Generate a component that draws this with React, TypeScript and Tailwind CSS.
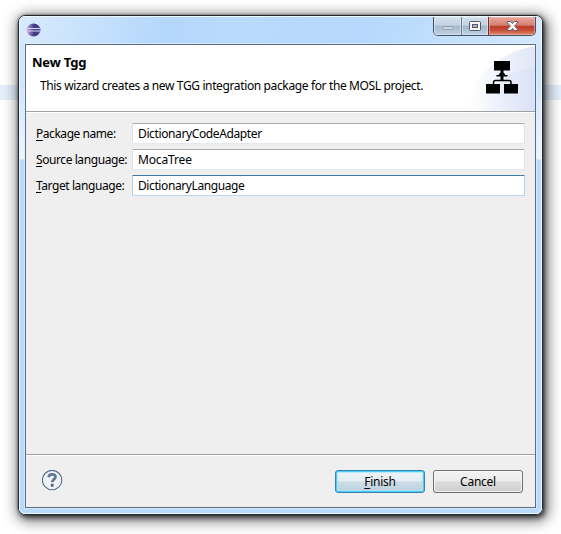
import React from "react";

type FieldProps = {
  hotkey: string;
  label: string;
  value: string;
  labelStyle: string;
  valueStyle: string;
  focused?: boolean;
};

function Field({ hotkey, label, value, labelStyle, valueStyle, focused }: FieldProps) {
  return (
    <label className="flex h-[21px] items-center">
      <span className={`w-24 shrink-0 whitespace-nowrap ${labelStyle}`}>
        <span className="underline underline-offset-2">{hotkey}</span>
        {label}
      </span>
      <span
        className={`flex h-[21px] w-[393px] items-center rounded-[1px] border bg-white pl-[5px] ${
          focused
            ? "border-x-[#b5cfe7] border-t-[#3d7bad] border-b-[#b7d9ed]"
            : "border-x-[#e2e3ea] border-t-[#abadb3] border-b-[#e3e9ef]"
        }`}
      >
        <span className={valueStyle}>{value}</span>
      </span>
    </label>
  );
}

function EclipseIcon() {
  return (
    <svg className="h-4 w-4" viewBox="0 0 16 16">
      <defs>
        <linearGradient id="orb" x1="0" x2="1">
          <stop offset="0" stopColor="#e9aecb" />
          <stop offset=".25" stopColor="#8276b4" />
          <stop offset=".55" stopColor="#3c3a83" />
          <stop offset="1" stopColor="#4b4892" />
        </linearGradient>
      </defs>
      <ellipse cx="7.5" cy="8" rx="7" ry="6.4" fill="url(#orb)" />
      <path d="M1.5 6.5h13M1.5 9h13" stroke="#d9daf2" strokeWidth="1" />
    </svg>
  );
}

function CaptionButtons() {
  return (
    <div className="mr-[5px] flex h-[19px] w-[103px] overflow-hidden rounded-b-[5px] border border-t-0 border-[#485361]">
      <div className="w-7 border-r border-[#6a7a8c] bg-[linear-gradient(#d3dfeb_0%,#c4d3e2_46%,#a6b9cd_50%,#bfd2e5_100%)] shadow-[inset_0_0_0_1px_#dce8f5aa]">
        <svg className="h-[18px] w-[27px]" viewBox="0 0 27 18">
          <rect x="8.5" y="9.5" width="11" height="3" rx="1" fill="#cbd4dc" stroke="#919faf" />
        </svg>
      </div>
      <div className="w-[27px] border-r border-[#6b3036] bg-[linear-gradient(#d3dfeb_0%,#c4d3e2_46%,#9fb5cb_50%,#bfd2e5_100%)] shadow-[inset_0_0_0_1px_#dce8f5aa]">
        <svg className="h-[18px] w-[26px]" viewBox="0 0 26 18">
          <rect x="7.5" y="4.5" width="11" height="9" rx="1" fill="#f5f5f5" stroke="#525966" />
          <rect x="10.5" y="7.5" width="5" height="3" fill="#a5b8ce" stroke="#525966" />
        </svg>
      </div>
      <div className="flex-1 bg-[linear-gradient(#e6aaa0_0%,#d57e70_46%,#b93c2b_50%,#c74b35_72%,#dc8a72_100%)] shadow-[inset_0_0_0_1px_#f3b9ad99]">
        <svg className="h-[18px] w-[46px]" viewBox="0 0 46 18">
          <path
            d="M18.5 4.5h3.2l1.8 2 1.8-2h3.2v1.4L25.6 9l2.9 3.1v1.4h-3.2l-1.8-2-1.8 2h-3.2v-1.4L21.4 9l-2.9-3.1z"
            fill="#f8f8f8"
            stroke="#625b66"
          />
        </svg>
      </div>
    </div>
  );
}

function HeaderArt() {
  return (
    <svg className="h-[66px] w-[75px]" viewBox="0 0 75 66">
      <defs>
        <linearGradient id="arc" x1="0" x2="1">
          <stop offset="0" stopColor="#fff" />
          <stop offset=".45" stopColor="#eff3fc" />
          <stop offset="1" stopColor="#e1e8f6" />
        </linearGradient>
        <linearGradient id="arcFront" x1="0" x2="1">
          <stop offset="0" stopColor="#eef2fb" stopOpacity="0" />
          <stop offset="1" stopColor="#d9e1f5" />
        </linearGradient>
      </defs>
      <path d="M8 66C10 36 34 8 75 1V66z" fill="url(#arc)" />
      <path d="M20 66C29 43 48 25 75 22V66z" fill="url(#arcFront)" />
      <g transform="translate(8 0)">
        <path d="M26 16h16v9.500H26zM32.500 25h3v3h-3z" />
        <path d="M34 26.500l3 2.500v1h2.500v1.500h-11V30H31v-1z" />
        <path d="M32.500 31h3v4h-3zM18 39h14v9.500H18zM36 39h14v9.500H36z" />
        <path d="M25.500 39v-1.500q0-2 2-2H41q2 0 2 2V39" fill="none" stroke="#000" strokeWidth="1.500" />
      </g>
    </svg>
  );
}

export default function App() {
  return (
    <div className="h-[534px] w-[561px] overflow-hidden bg-[linear-gradient(#fff_85px,#e4effc_85px,#e4effc_100px,#fff_100px)] pt-[15px] pl-[18px] font-['Noto_Sans','Open_Sans',sans-serif] text-[12px] leading-4 text-black">
      <div className="flex h-[500px] w-[525px] flex-col rounded-[7px] border border-[#202932] bg-[linear-gradient(#cde4fc_0px,#d0e6fd_70px,#eef6ff_143px,#b9dafc_144px)] shadow-[0_0_3px_0_#0008,2px_3px_5px_0_#0008,2px_3px_14px_3px_#0008]">
        <div className="flex h-full flex-col rounded-[6px] border border-[#eef8ff]">
          <div className="flex h-[27px] shrink-0 items-start justify-between rounded-t-[5px] bg-[linear-gradient(100deg,#d8eafd_0%,#c7e1fc_14%,#b4d7fc_28%,#badafb_40%,#b5d8fc_66%,#c5e1fc_85%,#d4e8fd_100%)]">
            <div className="pt-[5px] pl-[6px]">
              <EclipseIcon />
            </div>
            <CaptionButtons />
          </div>
          <div className="mx-[5px] flex h-[464px] flex-col border border-[#5d6e82] bg-[#efefef] shadow-[0_0_0_1px_#dff0ffaa]">
            <div className="flex h-[67px] shrink-0 justify-between border-b border-[#a0a0a0] bg-white">
              <div className="pt-[9px] pl-[6px] whitespace-nowrap">
                <h1 className="text-[13px] font-bold tracking-[-0.2px]">New Tgg</h1>
                <p className="mt-2 pl-2 tracking-[-0.37px]">
                  This wizard creates a new TGG integration package for the MOSL project.
                </p>
              </div>
              <HeaderArt />
            </div>
            <div className="flex flex-1 flex-col gap-[5px] border-t border-white pt-[10px] pl-[10px]">
              <Field hotkey="P" label="ackage name:" value="DictionaryCodeAdapter" labelStyle="tracking-[-0.45px]" valueStyle="tracking-[-0.38px]" />
              <Field hotkey="S" label="ource language:" value="MocaTree" labelStyle="tracking-[-0.42px]" valueStyle="tracking-[-0.15px]" />
              <Field hotkey="T" label="arget language:" value="DictionaryLanguage" labelStyle="tracking-[-0.42px]" valueStyle="tracking-[-0.4px]" focused />
            </div>
            <div className="flex h-[53px] shrink-0 items-start border-t border-[#a0a0a0] pr-3 pl-4 shadow-[inset_0_1px_#fff]">
              <svg className="mt-[15px] h-[21px] w-[21px]" viewBox="0 0 21 21">
                <circle cx="10.100" cy="10.100" r="9.700" fill="#f2f2f2" stroke="#576c93" strokeWidth="1.100" />
                <path d="M6.700 7.300C6.700 5.100 8.100 4.300 10 4.300c2.200 0 3.500 1 3.500 2.800 0 2.300-3.300 2.300-3.300 5.200" fill="none" stroke="#63769b" strokeWidth="2.700" />
                <rect x="8.700" y="13.800" width="3" height="3" rx="1" fill="#536890" />
              </svg>
              <button className="mt-[15px] ml-auto h-[23px] w-[90px] rounded-[3px] border border-[#3c7fb1] bg-[linear-gradient(#f0f5f8_0%,#e3edf3_48%,#cfdee7_51%,#b9d0dc_100%)] pt-px leading-5 tracking-[-0.25px] shadow-[inset_0_0_0_1px_#45d1f5,inset_0_0_1px_2px_#9de5f8aa]">
                <span className="underline underline-offset-2">F</span>inish
              </button>
              <button className="mt-[15px] ml-2 h-[23px] w-[90px] rounded-[3px] border border-[#707070] bg-[linear-gradient(#f2f2f2_0%,#ebebeb_48%,#dddddd_51%,#cfcfcf_100%)] pt-px leading-5 tracking-[-0.25px] shadow-[inset_0_0_0_1px_#fafafacc]">
                Cancel
              </button>
            </div>
          </div>
        </div>
      </div>
    </div>
  );
}
